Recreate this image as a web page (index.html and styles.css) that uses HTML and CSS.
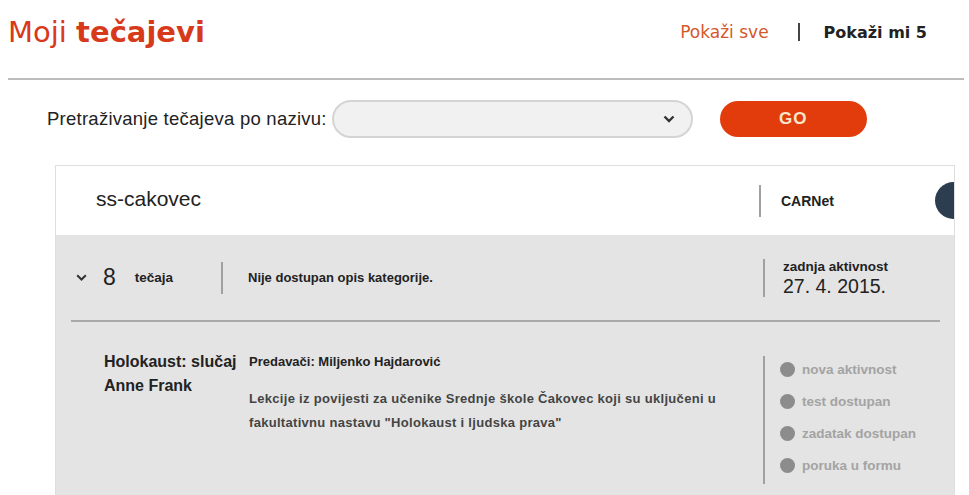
FILE: index.html
```html
<!DOCTYPE html>
<html>
<head>
	<meta charset="utf-8">
	<title>Moji tečajevi</title>
	<link rel="stylesheet" href="styles.css">
</head>
<body>
	<header class="top">
		<h1 class="title">Moji <b>tečajevi</b></h1>
		<nav class="show">
			<a class="show-all" href="#">Pokaži sve</a>
			<span class="sep"></span>
			<a class="show-five" href="#">Pokaži mi 5</a>
		</nav>
	</header>
	<main class="content">
		<form class="search">
			<label>Pretraživanje tečajeva po nazivu:</label>
			<div class="select">
				<svg width="12" height="8" viewBox="0 0 12 8"><polyline points="1.5,1.5 6,6 10.5,1.5" fill="none" stroke="#333" stroke-width="2.4"/></svg>
			</div>
			<button class="go" type="button">GO</button>
		</form>
		<section class="category">
			<div class="cat-head">
				<h2>ss-cakovec</h2>
				<div class="owner">CARNet</div>
				<span class="avatar"></span>
			</div>
			<div class="cat-body">
				<div class="cat-info">
					<div class="count">
						<svg width="11" height="7" viewBox="0 0 11 7"><polyline points="1.2,1.2 5.5,5.5 9.8,1.2" fill="none" stroke="#333" stroke-width="2"/></svg>
						<span class="num">8</span>
						<span class="unit">tečaja</span>
					</div>
					<div class="desc">Nije dostupan opis kategorije.</div>
					<div class="last">
						<span class="last-label">zadnja aktivnost</span>
						<span class="last-date">27. 4. 2015.</span>
					</div>
				</div>
				<div class="course">
					<h3 class="course-name">Holokaust: slučaj Anne Frank</h3>
					<div class="course-text">
						<p class="teachers">Predavači: Miljenko Hajdarović</p>
						<p class="summary">Lekcije iz povijesti za učenike Srednje škole Čakovec koji su uključeni u fakultativnu nastavu "Holokaust i ljudska prava"</p>
					</div>
					<ul class="status">
						<li>nova aktivnost</li>
						<li>test dostupan</li>
						<li>zadatak dostupan</li>
						<li>poruka u formu</li>
					</ul>
				</div>
			</div>
		</section>
	</main>
</body>
</html>
```

FILE: styles.css
```css
/* fonts */
body {
	font-family: "Liberation Sans", Arial, sans-serif;
	color: #222;
}

.title, .show {
	font-family: "DejaVu Sans", sans-serif;
}

/* page */
body {
	margin: 0;
	background: #fff;
}

header.top {
	display: flex;
	align-items: center;
	justify-content: space-between;
	height: 80px;
	box-sizing: border-box;
	padding-bottom: 14px;
	margin: 0 5px 0 8px;
	border-bottom: 2px solid #bcbcbc;
}

.title {
	margin: 0;
	font-size: 29px;
	font-weight: normal;
	color: #d7391b;
}

.title b {
	font-weight: bold;
}

.show {
	display: flex;
	align-items: center;
	padding-right: 37px;
}

.show a {
	text-decoration: none;
}

.show-all {
	font-size: 17px;
	color: #d4592a;
}

.show-five {
	font-size: 16px;
	font-weight: bold;
	color: #222;
}

.show .sep {
	width: 2px;
	height: 18px;
	background: #444;
	margin: 0 24px 0 29px;
}

/* search */
form.search {
	display: flex;
	align-items: center;
	margin: 20px 0 0 47px;
}

form.search label {
	font-size: 18.5px;
	letter-spacing: 0.25px;
	margin-right: 5px;
}

.select {
	width: 361px;
	height: 38px;
	box-sizing: border-box;
	border: 2px solid #d4d4d4;
	border-radius: 19px;
	background: #f1f1f1;
	display: flex;
	align-items: center;
	justify-content: flex-end;
	padding-right: 16px;
}

button.go {
	margin-left: 27px;
	width: 147px;
	height: 36px;
	border: 0;
	border-radius: 18px;
	background: #e23c0d;
	color: #f6e8cc;
	font-family: "Liberation Sans", Arial, sans-serif;
	font-weight: bold;
	font-size: 17px;
	letter-spacing: 1px;
}

/* category card */
section.category {
	margin: 27px 0 0 55px;
	width: 900px;
	box-sizing: border-box;
	border: 1px solid #dedede;
	overflow: hidden;
}

.cat-head {
	display: flex;
	align-items: center;
	height: 69px;
	padding-left: 40px;
	background: #fff;
}

.cat-head h2 {
	flex: 1;
	margin: 0 0 3px;
	font-size: 21px;
	font-weight: normal;
}

.owner {
	width: 154px;
	height: 32px;
	border-left: 2px solid #a0a0a0;
	padding-left: 20px;
	display: flex;
	align-items: center;
	font-size: 14px;
	font-weight: bold;
}

.avatar {
	width: 37px;
	height: 37px;
	border-radius: 50%;
	background: #2c3d4f;
	margin-right: -18px;
	flex: none;
}

.cat-body {
	background: #e4e4e4;
	padding: 0 14px 40px 15px;
}

.cat-info {
	display: grid;
	grid-template-columns: 152px 540px 1fr;
	align-items: center;
	height: 85px;
	border-bottom: 2px solid #a9a9a9;
}

.count {
	display: flex;
	align-items: center;
	height: 32px;
	padding-left: 5px;
	border-right: 2px solid #a0a0a0;
}

.count .num {
	font-size: 23px;
	margin-left: 16px;
}

.count .unit {
	font-size: 13.5px;
	font-weight: bold;
	margin-left: 19px;
}

.desc {
	padding-left: 25px;
	font-size: 13px;
	font-weight: bold;
}

.last {
	display: flex;
	flex-direction: column;
	border-left: 2px solid #a0a0a0;
	padding-left: 18px;
}

.last-label {
	font-size: 13.5px;
	font-weight: bold;
	line-height: 16px;
}

.last-date {
	font-size: 19.5px;
	line-height: 22px;
}

/* course */
.course {
	display: grid;
	grid-template-columns: 178px 514px 1fr;
	padding-top: 28px;
}

.course-name {
	margin: 0;
	padding-left: 33px;
	font-size: 16px;
	line-height: 24px;
}

.course-text p {
	margin: 0;
	font-size: 13px;
	font-weight: bold;
	line-height: 24px;
}

.course-text .teachers {
	margin-bottom: 13px;
}

.course-text .summary {
	color: #444;
	letter-spacing: 0.3px;
}

ul.status {
	list-style: none;
	margin: 6px 0 0;
	padding: 0 0 0 15px;
	border-left: 2px solid #a0a0a0;
}

ul.status li {
	display: flex;
	align-items: center;
	height: 26px;
	margin-bottom: 6px;
	font-size: 13.5px;
	font-weight: bold;
	color: #a3a3a3;
}

ul.status li:before {
	content: '';
	width: 15px;
	height: 15px;
	border-radius: 50%;
	background: #8c8c8c;
	margin-right: 7px;
}
```
